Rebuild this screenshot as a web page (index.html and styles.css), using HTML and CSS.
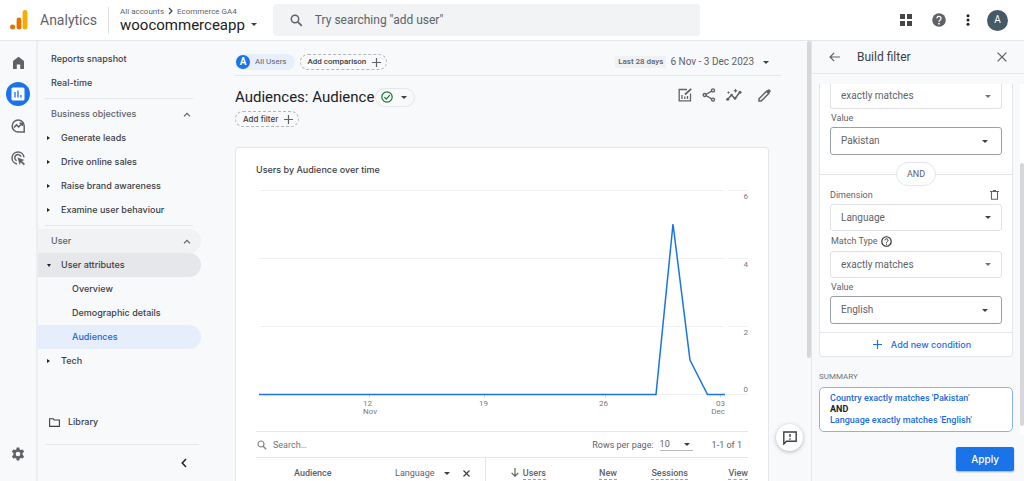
FILE: index.html
```html
<!DOCTYPE html>
<html lang="en">
<head>
<meta charset="utf-8">
<title>Analytics</title>
<link rel="stylesheet" href="styles.css">
</head>
<body>
<header class="topbar">
  <svg class="logo" width="19" height="20" viewBox="0 0 19 20" aria-hidden="true"><circle cx="2.6" cy="17" r="2.5" fill="#e37400"/><rect x="6.6" y="7.6" width="4.8" height="12" rx="2.4" fill="#e37400"/><rect x="12.6" y="0" width="4.8" height="19.6" rx="2.4" fill="#f9ab00"/></svg>
  <span class="brand">Analytics</span>
  <div class="account">
    <div class="crumbs">All accounts <svg width="5" height="8" viewBox="0 0 5 8"><path d="M1 1l3 3-3 3" fill="none" stroke="#444746" stroke-width="1.3"/></svg> Ecommerce GA4</div>
    <button class="property">woocommerceapp <i class="caret"></i></button>
  </div>
  <label class="search">
    <svg width="13" height="13" viewBox="0 0 13 13"><circle cx="5" cy="5" r="3.7" fill="none" stroke="#5f6368" stroke-width="1.5"/><path d="M7.8 7.8l4 4" stroke="#5f6368" stroke-width="1.7"/></svg>
    <input type="text" placeholder="Try searching &quot;add user&quot;" aria-label="Search">
  </label>
  <div class="tools">
    <button aria-label="Apps"><svg width="12" height="12" viewBox="0 0 12 12" fill="#444746"><path d="M0 0h5v5H0zM7 0h5v5H7zM0 7h5v5H0zM7 7h5v5H7z"/></svg></button>
    <button aria-label="Help"><svg width="14" height="14" viewBox="0 0 14 14"><circle cx="7" cy="7" r="6.8" fill="#5f6368"/><path d="M5 5.4a2 2 0 1 1 3.2 1.5C7.400 7.500 7 7.800 7 8.700" fill="none" stroke="#fff" stroke-width="1.3"/><circle cx="7" cy="10.700" r=".9" fill="#fff"/></svg></button>
    <button aria-label="More"><svg width="4" height="12" viewBox="0 0 4 12" fill="#202124"><circle cx="2" cy="1.700" r="1.500"/><circle cx="2" cy="6" r="1.500"/><circle cx="2" cy="10.300" r="1.500"/></svg></button>
    <button class="avatar" aria-label="Account">A</button>
  </div>
</header>
<div class="body">
  <nav class="rail" aria-label="Sections">
    <a href="#" aria-label="Home"><svg width="13" height="13" viewBox="0 0 13 13"><path d="M1 5l5.500-4.300L12 5v8H8.200V8.500H4.800V13H1z" fill="#5f6368"/></svg></a>
    <a href="#" class="rail-active" aria-label="Reports"><svg width="14" height="14" viewBox="0 0 14 14"><rect x=".5" y=".5" width="13" height="13" rx="1.500" fill="#fff"/><path d="M4 5v5.500M7 3.500v7M10 8v2.500" stroke="#1a73e8" stroke-width="1.300"/></svg></a>
    <a href="#" aria-label="Explore"><svg width="15" height="14" viewBox="0 0 15 14" fill="none" stroke="#5f6368" stroke-width="1.500"><path d="M13.200 7A6 6 0 1 0 7.200 13h6z"/><path d="M3 8.500l2.500-2.600 2.200 2 3.400-3.600M8.500 4.300h2.800v2.600"/></svg></a>
    <a href="#" aria-label="Advertising"><svg width="15" height="15" viewBox="0 0 15 15"><path d="M6 12.900A6 6 0 1 1 13 6.400M5.600 9.700A3.200 3.200 0 1 1 10 5.800" fill="none" stroke="#5f6368" stroke-width="1.500"/><path d="M6.500 6.500l7 2.400-2.500 1.200 3 3-1.200 1.200-3-3-1.100 2.600z" fill="#5f6368"/></svg></a>
    <a href="#" class="rail-last" aria-label="Admin"><svg width="14" height="14" viewBox="0 0 14 14"><path d="M5.700.5h2.600l.4 1.900 1.200.7 1.900-.6 1.300 2.200-1.500 1.300v1.900l1.500 1.400-1.300 2.200-1.900-.6-1.200.7-.4 1.900H5.700l-.4-1.900-1.200-.7-1.900.6L.9 9.300l1.500-1.400V6L.9 4.700l1.300-2.200 1.900.6 1.200-.7z" fill="#5f6368"/><circle cx="7" cy="7" r="2.300" fill="#f8f9fb"/></svg></a>
  </nav>
  <nav class="side" aria-label="Reports">
    <a class="item" href="#">Reports snapshot</a>
    <a class="item" href="#">Real-time</a>
    <hr>
    <button class="item group">Business objectives <svg width="8" height="5" viewBox="0 0 8 5"><path d="M1 4.300l3-3 3 3" fill="none" stroke="#5f6368" stroke-width="1.200"/></svg></button>
    <a class="item sub" href="#"><i class="tri"></i>Generate leads</a>
    <a class="item sub" href="#"><i class="tri"></i>Drive online sales</a>
    <a class="item sub" href="#"><i class="tri"></i>Raise brand awareness</a>
    <a class="item sub" href="#"><i class="tri"></i>Examine user behaviour</a>
    <hr>
    <button class="item group user">User <svg width="8" height="5" viewBox="0 0 8 5"><path d="M1 4.300l3-3 3 3" fill="none" stroke="#5f6368" stroke-width="1.200"/></svg></button>
    <a class="item sub open" href="#"><i class="tri down"></i>User attributes</a>
    <a class="item leaf" href="#">Overview</a>
    <a class="item leaf" href="#">Demographic details</a>
    <a class="item leaf current" href="#">Audiences</a>
    <a class="item sub" href="#"><i class="tri"></i>Tech</a>
    <div class="side-end">
      <a class="item library" href="#"><svg width="11" height="9" viewBox="0 0 11 9"><path d="M.6 8.400V.8h3.600l1 1.200h5.200v6.400z" fill="none" stroke="#3c4043" stroke-width="1.100"/></svg>Library</a>
      <hr>
      <button class="collapse" aria-label="Collapse"><svg width="6" height="10" viewBox="0 0 6 10"><path d="M5 1L1.200 5 5 9" fill="none" stroke="#202124" stroke-width="1.500"/></svg></button>
    </div>
  </nav>
  <main class="main">
    <div class="toolbar">
      <button class="chip users"><b>A</b>All Users</button>
      <button class="chip dashed">Add comparison <svg width="9" height="9" viewBox="0 0 9 9"><path d="M4.500 0v9M0 4.500h9" stroke="#5f6368" stroke-width="1.200"/></svg></button>
      <button class="dates"><span class="range">Last 28 days</span>6 Nov - 3 Dec 2023 <i class="caret"></i></button>
    </div>
    <div class="heading">
      <h1>Audiences: Audience</h1>
      <button class="status" aria-label="Status"><svg width="12" height="12" viewBox="0 0 12 12" fill="none" stroke="#137333" stroke-width="1.200"><circle cx="6" cy="6" r="5.200"/><path d="M3.400 6.200l1.900 1.900 3.500-3.900"/></svg><i class="caret"></i></button>
      <div class="actions">
        <button aria-label="Customise"><svg width="14" height="14" viewBox="0 0 14 14" fill="none" stroke="#5f6368" stroke-width="1.300"><path d="M9 1.500H1.200v11.300h11.300V5.500M4 7v4M6.800 8.500V11M9.500 8v3"/><path d="M7 6.500L13.200.8" stroke-width="1.800"/></svg></button>
        <button aria-label="Share"><svg width="14" height="14" viewBox="0 0 14 14" fill="none" stroke="#5f6368" stroke-width="1.400"><path d="M3 7l7.500-4.300M3 7l7.500 4.300"/><g fill="#f8f9fb"><circle cx="2.700" cy="7" r="1.500"/><circle cx="11" cy="2.400" r="1.500"/><circle cx="11" cy="11.600" r="1.500"/></g></svg></button>
        <button aria-label="Insights"><svg width="16" height="14" viewBox="0 0 16 14"><path d="M1.500 11.500l4-4.500 3.500 3.500 5-6.500" fill="none" stroke="#5f6368" stroke-width="1.500"/><g fill="#5f6368"><circle cx="1.700" cy="11.300" r="1.500"/><circle cx="5.600" cy="7" r="1.300"/><circle cx="9" cy="10.300" r="1.400"/><circle cx="14" cy="4.200" r="1.500"/><path d="M9.500.5l.7 1.600 1.600.7-1.600.7-.7 1.600-.7-1.600-1.600-.7 1.600-.7zM2.500 3l.5 1.100 1.100.5-1.100.5-.5 1.100L2 5.100.9 4.600 2 4.100z"/></g></svg></button>
        <button class="edit" aria-label="Edit"><svg width="13" height="13" viewBox="0 0 13 13"><path d="M1 12v-2.200L8.500 2.300l2.200 2.200L3.200 12z" fill="none" stroke="#5f6368" stroke-width="1.500"/><path d="M8 2.300L10.200.5q.6-.5 1.200 0l1.100 1.100q.5.600 0 1.200L10.700 5z" fill="#5f6368"/></svg></button>
      </div>
    </div>
    <button class="chip dashed filter">Add filter <svg width="9" height="9" viewBox="0 0 9 9"><path d="M4.500 0v9M0 4.500h9" stroke="#5f6368" stroke-width="1.200"/></svg></button>
    <section class="card">
      <h2>Users by Audience over time</h2>
      <svg class="chart" viewBox="0 0 492 236" role="img" aria-label="Users by Audience over time">
        <path d="M3 9.500h466M472 9.500h20M3 77.500h466M472 77.500h20M3 145.500h466M472 145.500h20M3 213.500h489" stroke="#f1f2f4"/>
        <path d="M113.500 214v3M228.500 214v3M349.500 214v3M464.500 214v3" stroke="#dadce0"/>
        <path d="M3 213.500h397L417 43l17 136 17.500 34.500H469" fill="none" stroke="#1a73e8" stroke-width="1.500"/>
        <g text-anchor="end"><text x="492" y="18">6</text><text x="492" y="86">4</text><text x="492" y="154">2</text><text x="492" y="211">0</text></g>
        <text x="107" y="225">12</text><text x="107" y="233">Nov</text><text x="223" y="225">19</text><text x="343" y="225">26</text>
        <g text-anchor="end"><text x="469" y="225">03</text><text x="469" y="233">Dec</text></g>
      </svg>
      <div class="table-tools">
        <label class="find"><svg width="10" height="10" viewBox="0 0 10 10"><circle cx="4" cy="4" r="3" fill="none" stroke="#80868b" stroke-width="1.200"/><path d="M6.200 6.200L9.200 9.200" stroke="#80868b" stroke-width="1.400"/></svg><input type="text" placeholder="Search…" aria-label="Search table"></label>
        <label class="rows" for="rows">Rows per page:</label>
        <span class="rows-select"><select id="rows"><option>10</option></select><i class="caret"></i></span>
        <span>1-1 of 1</span>
      </div>
      <table class="data">
        <tr>
          <th class="dim"><div><span>Audience</span><button class="second">Language <i class="caret"></i></button><button aria-label="Remove"><svg width="7" height="7" viewBox="0 0 7 7"><path d="M.5.500l6 6M6.500.500l-6 6" stroke="#3c4043" stroke-width="1.200"/></svg></button></div></th>
          <th class="c1"><svg width="8" height="9" viewBox="0 0 8 9"><path d="M4 0v8M.6 4.800L4 8.200l3.400-3.400" fill="none" stroke="#5f6368" stroke-width="1.200"/></svg> <u>Users</u></th>
          <th class="c2"><u>New</u></th>
          <th class="c2"><u>Sessions</u></th>
          <th class="c3"><u>View</u></th>
        </tr>
      </table>
    </section>
    <button class="feedback" aria-label="Feedback"><svg width="14" height="14" viewBox="0 0 14 14"><path d="M.8 13V1h12.400v9.300H3.500z" fill="none" stroke="#3c4043" stroke-width="1.400"/><path d="M7 3v3M7 7.200v1.500" stroke="#3c4043" stroke-width="1.400"/></svg></button>
  </main>
  <div class="page-track"><div class="thumb"></div></div>
  <aside class="panel">
    <div class="panel-head">
      <button aria-label="Back"><svg width="11" height="10" viewBox="0 0 11 10"><path d="M11 5H1M5.200.800L1 5l4.200 4.200" fill="none" stroke="#5f6368" stroke-width="1.200"/></svg></button>
      <h2>Build filter</h2>
      <button aria-label="Close"><svg width="10" height="10" viewBox="0 0 10 10"><path d="M.6.600l8.800 8.800M9.400.600L.6 9.400" stroke="#5f6368" stroke-width="1.300"/></svg></button>
    </div>
    <div class="panel-body">
      <div class="panel-scroll">
        <div class="conditions">
          <div class="cond">
            <span class="pick cut"><select aria-label="Match type 1"><option>exactly matches</option></select><i class="caret gray"></i></span>
            <label for="v1">Value</label>
            <span class="pick strong"><select id="v1"><option>Pakistan</option></select><i class="caret"></i></span>
          </div>
          <div class="and"><span>AND</span></div>
          <div class="cond">
            <div class="label-row"><label for="d2">Dimension</label><button aria-label="Delete"><svg width="9" height="10" viewBox="0 0 9 10" fill="none" stroke="#5f6368" stroke-width="1.100"><path d="M1.500 1.500v7.800h6V1.500M0 1.500h9M3 .6h3"/></svg></button></div>
            <span class="pick"><select id="d2"><option>Language</option></select><i class="caret"></i></span>
            <label class="tall" for="m2">Match Type <svg width="11" height="11" viewBox="0 0 11 11"><circle cx="5.500" cy="5.500" r="4.700" fill="none" stroke="#202124" stroke-width="1.100"/><path d="M4 4.300a1.500 1.500 0 1 1 2.500 1.100q-1 .7-1 1.300" fill="none" stroke="#202124"/><circle cx="5.500" cy="8.200" r=".6" fill="#202124"/></svg></label>
            <span class="pick"><select id="m2"><option>exactly matches</option></select><i class="caret gray"></i></span>
            <label for="v2">Value</label>
            <span class="pick strong"><select id="v2"><option>English</option></select><i class="caret"></i></span>
          </div>
          <button class="add"><svg width="9" height="9" viewBox="0 0 9 9"><path d="M4.500 0v9M0 4.500h9" stroke="#1a73e8" stroke-width="1.200"/></svg>Add new condition</button>
        </div>
        <h3>SUMMARY</h3>
        <div class="summary">Country exactly matches 'Pakistan'<br><b>AND</b><br>Language exactly matches 'English'</div>
      </div>
      <div class="panel-track"><div class="thumb"></div></div>
    </div>
    <div class="panel-foot"><button class="apply">Apply</button></div>
  </aside>
</div>
</body>
</html>
```
FILE: styles.css
```css
* { box-sizing: border-box; }
body {
  margin: 0;
  height: 100vh;
  display: flex;
  flex-direction: column;
  overflow: hidden;
  background: #f8f9fb;
  color: #3c4043;
  font: 9px/12px Roboto, sans-serif;
}
button, input, select {
  font: inherit;
  color: inherit;
  background: none;
  border: 0;
  padding: 0;
  margin: 0;
  outline: 0;
}
select { appearance: none; }
a { color: inherit; text-decoration: none; }
svg { flex: none; }
h1, h2, h3 { margin: 0; font-weight: 400; }
button { display: flex; align-items: center; white-space: nowrap; }
hr { border: 0; height: 1px; background: #e4e6e9; margin: 3px 42px 3px 7px; }
.caret {
  flex: none;
  display: inline-block;
  border: 3px solid transparent;
  border-top-color: #3c4043;
  border-bottom: 0;
}
.caret.gray { border-top-color: #70757a; }

/* Top bar */
.topbar {
  flex: none;
  height: 41px;
  display: flex;
  align-items: center;
  background: #fff;
  border-bottom: 1px solid #e4e6e9;
  padding: 0 16px 0 10px;
}
.brand { margin: 0 11px; font-size: 14px; line-height: 20px; color: #5f6368; }
.account { border-left: 1px solid #e0e2e5; padding: 0 16px 0 11px; }
.crumbs { display: flex; align-items: center; gap: 4px; color: #5f6368; font-size: 8px; line-height: 9px; white-space: nowrap; }
.property { font-size: 15px; line-height: 18px; color: #202124; gap: 6px; }
.search {
  flex: 0 1 427px;
  height: 32px;
  display: flex;
  align-items: center;
  gap: 12px;
  padding-left: 17px;
  border-radius: 4px;
  background: #f1f3f4;
}
.search input { flex: 1; min-width: 0; font-size: 12px; }
.search input::placeholder { color: #5f6368; opacity: 1; }
.tools { margin-left: auto; display: flex; align-items: center; gap: 20px; }
.avatar {
  width: 21px;
  height: 21px;
  margin-left: -3px;
  justify-content: center;
  border-radius: 50%;
  background: #455a64;
  color: #fff;
  font-size: 10px;
}

.body { flex: 1; min-height: 0; display: flex; }

/* Icon rail */
.rail {
  flex: none;
  width: 38px;
  display: flex;
  flex-direction: column;
  align-items: center;
  gap: 8px;
  padding: 9px 0 15px;
  border-right: 2px solid #eceef0;
}
.rail a { width: 24px; height: 24px; display: grid; place-items: center; border-radius: 50%; }
.rail .rail-active { background: #1a73e8; }
.rail .rail-last { margin-top: auto; }

/* Report navigation */
.side {
  flex: none;
  width: 197px;
  display: flex;
  flex-direction: column;
  padding: 6px 0 7px;
  font-family: Inter, sans-serif;
  font-weight: 500;
}
.item {
  flex: none;
  height: 24px;
  display: flex;
  align-items: center;
  margin-right: 34px;
  padding-left: 13px;
  border-radius: 0 12px 12px 0;
}
.group { justify-content: space-between; padding-right: 10px; color: #5f6368; }
.sub { padding-left: 9px; }
.leaf { padding-left: 34px; }
.user { background: #f1f2f4; }
.open { background: #e6e7ea; }
.current { background: #e6eefc; color: #1967d2; }
.tri { width: 14px; display: flex; }
.tri::before { content: ""; border: 2px solid transparent; border-left: 3px solid #202124; border-right: 0; }
.tri.down::before { border: 2px solid transparent; border-top: 3px solid #202124; border-bottom: 0; }
.side-end { margin-top: auto; }
.library { gap: 8px; padding-left: 11px; }
.side-end hr { margin: 10px 36px 7px 8px; }
.collapse { height: 22px; margin-left: 143px; }

/* Report */
.main { flex: 1; min-width: 0; display: flex; flex-direction: column; align-items: stretch; position: relative; }
.toolbar {
  flex: none;
  height: 35px;
  display: flex;
  align-items: center;
  margin-right: 26px;
  padding-top: 8px;
  border-bottom: 1px solid #e4e6e9;
}
.chip { height: 16px; border-radius: 8px; font-weight: 500; font-size: 8px; }
.users { gap: 5px; padding-right: 8px; background: #e8effc; color: #5f6368; font-weight: 400; }
.users b {
  width: 14px;
  height: 14px;
  margin-left: 1px;
  border-radius: 50%;
  background: #1a73e8;
  color: #fff;
  font-size: 10px;
  line-height: 14px;
  text-align: center;
}
.dashed { gap: 6px; padding: 0 5px 0 7px; border: 1px dashed #b4b8bc; }
.users + .dashed { margin-left: 5px; }
.dates { margin-left: auto; margin-right: 12px; font-size: 10px; color: #5f6368; }
.dates .caret { margin-left: 9px; }
.range { margin-right: 4px; padding: 0 3px; background: #f0f1f3; font-size: 8px; font-weight: 500; }
.heading { flex: none; display: flex; align-items: center; height: 35px; padding-top: 7px; }
h1 { font-size: 15px; line-height: 20px; color: #202124; white-space: nowrap; }
.status { height: 19px; margin-left: 1px; padding: 0 7px 0 5px; gap: 8px; border: 1px solid #e4e6e9; border-radius: 10px; }
.actions { margin-left: auto; margin-right: 36px; padding-bottom: 4px; display: flex; align-items: center; gap: 10px; }
.edit { margin-left: 6px; }
.filter { align-self: flex-start; flex: none; font-family: Inter, sans-serif; }
.card {
  flex: 1;
  min-height: 0;
  margin: 20px 38px 0 0;
  padding: 15px 20px 0;
  overflow: hidden;
  background: #fff;
  border: 1px solid #e4e6e9;
  border-bottom: 0;
  border-radius: 4px 4px 0 0;
}
.card h2 { font: 500 9px/14px Inter, sans-serif; }
.chart { display: block; width: 100%; margin-top: 4px; }
.chart text { font-size: 8px; fill: #757a7f; }
.table-tools {
  height: 27px;
  display: flex;
  align-items: center;
  margin-top: 14px;
  padding-right: 6px;
  border: 1px solid #e4e6e9;
  border-width: 1px 0;
  color: #5f6368;
}
.find { flex: 1; display: flex; align-items: center; gap: 6px; padding-left: 1px; }
.find input { width: 100px; }
.find input::placeholder { color: #70757a; opacity: 1; }
.rows-select { width: 33px; display: grid; align-items: center; margin: 0 19px 0 6px; border-bottom: 1px solid #b4b8bc; }
.rows-select > *, .pick > * { grid-area: 1 / 1; }
.rows-select .caret { justify-self: end; margin-right: 3px; }
.data { width: 100%; table-layout: fixed; border-collapse: collapse; color: #5f6368; }
.data th { height: 30px; padding: 0; font-weight: 500; text-align: right; white-space: nowrap; }
.data u { text-decoration: none; padding-bottom: 1px; border-bottom: 1px dashed #9aa0a6; }
.data .dim { border-right: 1px solid #e4e6e9; }
.dim div { display: flex; align-items: center; padding: 0 15px 0 38px; }
.second { margin-left: auto; margin-right: 13px; gap: 9px; font-weight: 400; }
.c1 { width: 61px; }
.c2 { width: 71px; }
.data .c3 { width: 60px; }
.c1 svg { margin-right: 2px; vertical-align: -1px; }
.feedback {
  position: absolute;
  right: 4px;
  bottom: 30px;
  width: 27px;
  height: 27px;
  justify-content: center;
  border-radius: 50%;
  background: #fff;
  box-shadow: 0 1px 4px #0004;
}
.page-track { flex: none; width: 4px; }
.thumb { background: #d5d7da; border-radius: 2px; }
.page-track .thumb { height: 72%; }

/* Filter panel */
.panel { flex: none; width: 213px; display: flex; flex-direction: column; border-left: 1px solid #e4e6e9; }
.panel-head { flex: none; height: 33px; display: flex; align-items: center; padding: 0 17px; border-bottom: 1px solid #e4e6e9; }
.panel-head h2 { flex: 1; margin-left: 17px; font-size: 12px; line-height: 16px; }
.panel-body { flex: 1; min-height: 0; display: flex; justify-content: space-between; margin-top: 10px; }
.panel-scroll { flex: 1; min-width: 0; padding: 0 7px; }
.conditions { background: #fff; border: 1px solid #e4e6e9; border-top: 0; border-radius: 0 0 4px 4px; }
.cond { display: flex; flex-direction: column; padding: 0 10px; color: #5f6368; }
.cond label { display: flex; align-items: center; gap: 3px; height: 18px; padding-left: 1px; }
.cond .tall { height: 20px; }
.pick { height: 27px; display: grid; align-items: stretch; border: 1px solid #dfe1e5; border-radius: 3px; }
.pick select { width: 100%; padding-left: 10px; font-size: 10px; }
.pick .caret { align-self: center; justify-self: end; margin-right: 10px; }
.strong { border-color: #9aa0a6; height: 28px; }
.strong .caret { margin-right: 13px; }
.cut { height: 25px; border-top: 0; border-radius: 0 0 3px 3px; }
.and { display: grid; place-items: center; margin-top: 7px; color: #5f6368; background: linear-gradient(#e4e6e9, #e4e6e9) center / 100% 1px no-repeat; }
.and span { padding: 5px 10px; line-height: 12px; border: 1px solid #e4e6e9; border-radius: 12px; background: #fff; }
.label-row { display: flex; align-items: center; justify-content: space-between; padding-right: 3px; margin-left: -1px; }
.add { width: 100%; height: 24px; margin-top: 8px; padding-left: 12px; gap: 9px; justify-content: center; border-top: 1px solid #e4e6e9; color: #1a6de0; font: 500 9px Inter, sans-serif; }
h3 { margin: 14px 0 4px; font-size: 8px; line-height: 12px; color: #70757a; }
.summary { padding: 5px 10px; border: 1px solid #8ab0f5; border-radius: 5px; background: #fff; color: #1a6de0; font-size: 9px; line-height: 11px; font-weight: 500; white-space: nowrap; }
.summary b { color: #202124; font-weight: 700; }
.panel-track { flex: none; width: 4px; background: #fff; }
.panel-track .thumb { height: 75%; margin-top: 79px; }
.panel-foot { flex: none; display: flex; justify-content: flex-end; padding: 12px 10px 10px; }
.apply { height: 24px; padding: 0 15px; border-radius: 2px; background: #1a73e8; color: #fff; font: 500 10px Inter, sans-serif; box-shadow: 0 1px 2px #0005; }
```
